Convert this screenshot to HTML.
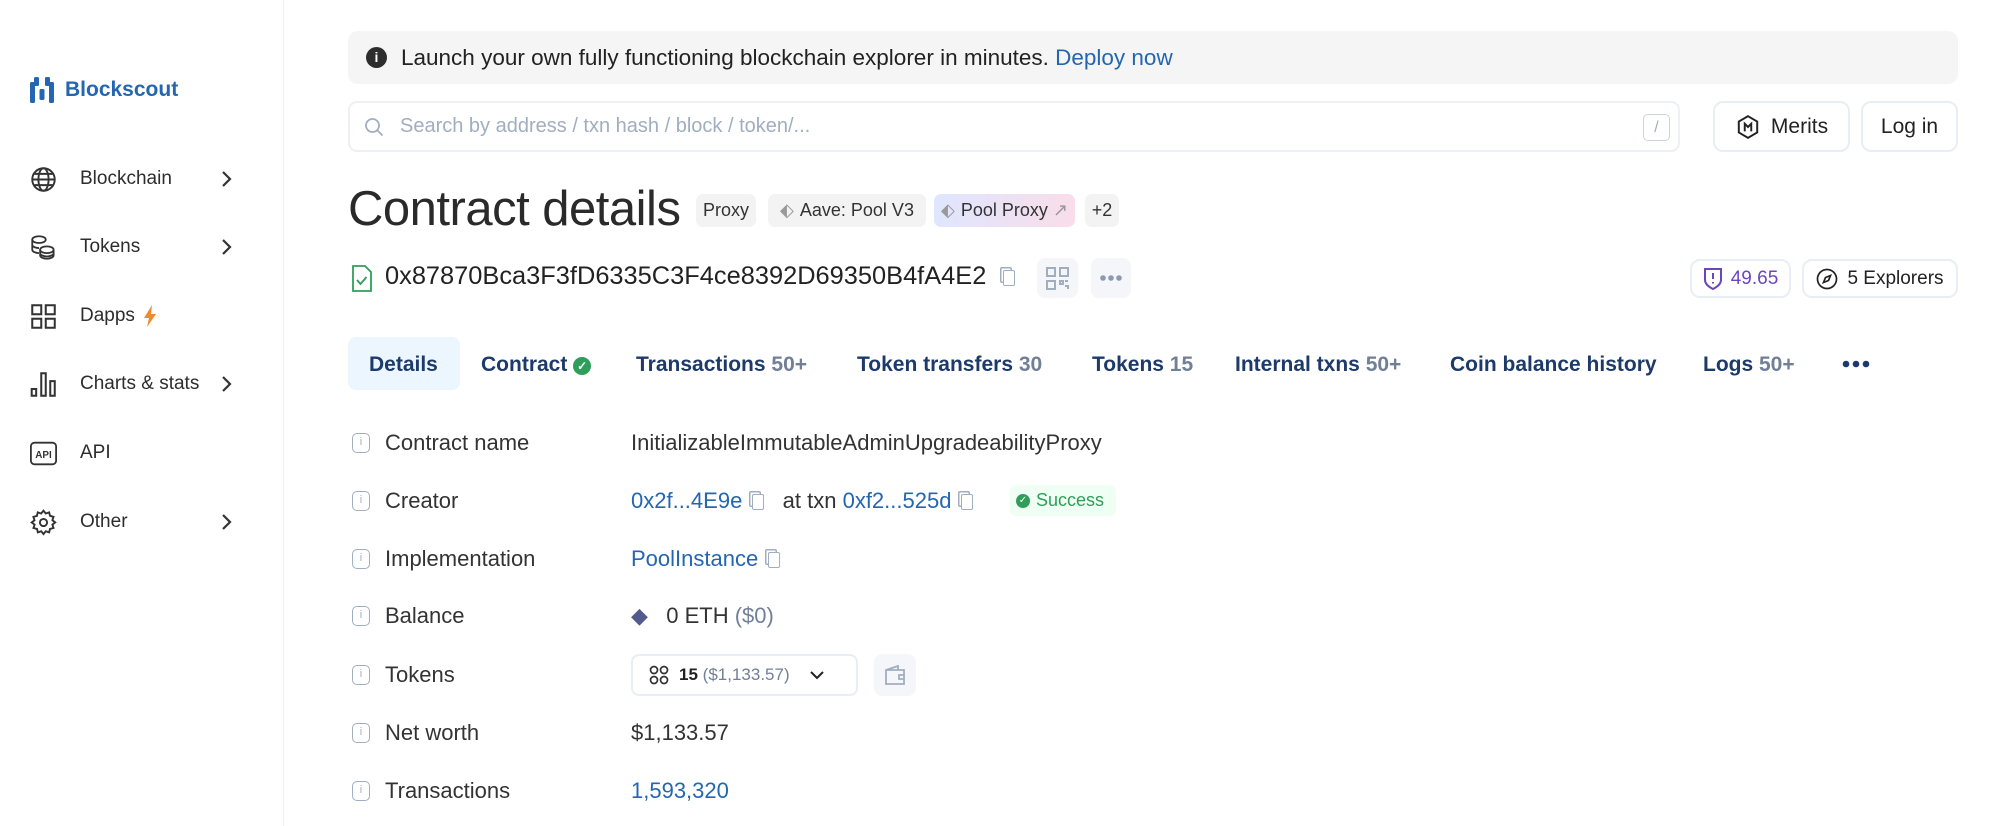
<!DOCTYPE html>
<html><head><meta charset="utf-8">
<style>
*{box-sizing:border-box;margin:0;padding:0}
body{width:2000px;height:826px;background:#fff;font-family:"Liberation Sans",sans-serif;color:#1a1a1a;position:relative;overflow:hidden}
.a{position:absolute}
.side{left:0;top:0;width:284px;height:826px;border-right:1px solid #eef0f3}
.nav{left:30px;height:30px;display:flex;align-items:center;font-size:19px;color:#2d2d2d}
.nav svg{width:27px;height:27px;margin-right:23px}
.chev{left:220px}
.btn{border:2px solid #e8eef5;border-radius:10px;display:flex;align-items:center;justify-content:center;font-size:21px;color:#222}
.tag{height:33px;border-radius:7px;background:#f3f3f3;display:flex;align-items:center;justify-content:center;font-size:18px;color:#333;top:194px}
.tab{top:353px;font-size:21px;font-weight:bold;color:#1d3a6b}
.tab span{color:#718096;font-weight:bold}
.lab{left:352px;display:flex;align-items:center;font-size:22px;color:#333}
.lab i{display:inline-block;flex:none;width:18px;height:20px;border:1.5px solid #a0aec0;border-radius:5px;margin-right:15px;font-style:normal;font-size:11px;color:#a0aec0;text-align:center;line-height:17px}
.val{left:631px;font-size:22px;color:#333}
.lk{color:#2566b0}
.cp{display:inline-block;width:12px;height:16px;border:1.5px solid #a0aec0;border-radius:2px;vertical-align:-2px;margin-left:10px;box-shadow:-3px -3px 0 -1.5px #fff,-3px -3px 0 0 #a0aec0}
</style></head><body>
<div class="a side"></div>
<div class="a" style="left:29px;top:76px;display:flex;align-items:center">
<svg width="26" height="28" viewBox="0 0 26 28"><rect x="1" y="6" width="5" height="21" rx="1.5" fill="#2566b0"/><rect x="20" y="6" width="5" height="21" rx="1.5" fill="#2566b0"/><rect x="10.5" y="13" width="5" height="11" rx="1.5" fill="#2566b0"/><rect x="5" y="1" width="5" height="9" rx="1.5" fill="#2566b0"/><rect x="16" y="1" width="5" height="9" rx="1.5" fill="#2566b0"/></svg>
<span style="font-size:21px;color:#2566b0;font-weight:bold;margin-left:10px">Blockscout</span></div>

<div class="a nav" style="top:164px"><svg viewBox="0 0 24 24" fill="none" stroke="#333" stroke-width="1.7"><circle cx="12" cy="12" r="10"/><ellipse cx="12" cy="12" rx="4.5" ry="10"/><path d="M2 12h20M4 7h16M4 17h16"/></svg>Blockchain</div>
<svg class="a chev" style="top:170px" width="12" height="18" viewBox="0 0 12 18" fill="none" stroke="#333" stroke-width="2.2"><path d="M3 2l7 7-7 7"/></svg>
<div class="a nav" style="top:232px"><svg viewBox="0 0 24 24" fill="none" stroke="#333" stroke-width="1.6"><ellipse cx="8" cy="5" rx="6" ry="3"/><path d="M2 5v9c0 1.6 2.7 3 6 3M2 9.5c0 1.6 2.7 3 6 3"/><ellipse cx="15" cy="14" rx="6" ry="3"/><path d="M9 14v5c0 1.6 2.7 3 6 3s6-1.4 6-3v-5M9 17c0 1.6 2.7 3 6 3s6-1.4 6-3"/></svg>Tokens</div>
<svg class="a chev" style="top:238px" width="12" height="18" viewBox="0 0 12 18" fill="none" stroke="#333" stroke-width="2.2"><path d="M3 2l7 7-7 7"/></svg>
<div class="a nav" style="top:301px"><svg viewBox="0 0 24 24" fill="none" stroke="#333" stroke-width="1.8"><rect x="2" y="2" width="8" height="8"/><rect x="14" y="2" width="8" height="8"/><rect x="2" y="14" width="8" height="8"/><rect x="14" y="14" width="8" height="8"/></svg>Dapps <svg style="width:14px;height:22px;margin:0 0 0 8px" viewBox="0 0 14 22"><path d="M9 0L1 13h5l-2 9 9-13H8z" fill="#f08a2c"/></svg></div>
<div class="a nav" style="top:369px"><svg viewBox="0 0 24 24" fill="none" stroke="#333" stroke-width="1.8"><rect x="1.5" y="16" width="4" height="6"/><rect x="10" y="2" width="4" height="20"/><rect x="18" y="9" width="4" height="13"/></svg>Charts &amp; stats</div>
<svg class="a chev" style="top:375px" width="12" height="18" viewBox="0 0 12 18" fill="none" stroke="#333" stroke-width="2.2"><path d="M3 2l7 7-7 7"/></svg>
<div class="a nav" style="top:438px"><svg viewBox="0 0 30 30"><rect x="1" y="3" width="28" height="24" rx="4" fill="none" stroke="#333" stroke-width="2"/><text x="15" y="20" font-size="11" font-weight="bold" text-anchor="middle" font-family="Liberation Sans" fill="#333">API</text></svg>API</div>
<div class="a nav" style="top:507px"><svg viewBox="0 0 24 24" fill="none" stroke="#333" stroke-width="1.7"><circle cx="12" cy="12" r="3.2"/><path d="M12 1.5l2 2.5 3-1 .8 3.1 3.1.8-1 3 2.5 2-2.5 2 1 3-3.1.8-.8 3.1-3-1-2 2.5-2-2.5-3 1-.8-3.1-3.1-.8 1-3L1.5 12 4 10 3 7l3.1-.8L6.9 3l3 1z"/></svg>Other</div>
<svg class="a chev" style="top:513px" width="12" height="18" viewBox="0 0 12 18" fill="none" stroke="#333" stroke-width="2.2"><path d="M3 2l7 7-7 7"/></svg>

<div class="a" style="left:348px;top:31px;width:1610px;height:53px;background:#f5f5f5;border-radius:10px;display:flex;align-items:center;padding-left:18px;font-size:22.5px;color:#222">
<span style="width:21px;height:21px;border-radius:50%;background:#2d2d2d;color:#fff;font-size:14px;font-weight:bold;text-align:center;line-height:21px;margin-right:14px">i</span>Launch your own fully functioning blockchain explorer in minutes.&nbsp;<span class="lk">Deploy now</span></div>

<div class="a" style="left:348px;top:101px;width:1332px;height:51px;border:2px solid #edf0f4;border-radius:9px;display:flex;align-items:center;padding-left:14px;font-size:20px;color:#a0aec0">
<svg width="20" height="20" viewBox="0 0 20 20" fill="none" stroke="#a0aec0" stroke-width="1.8"><circle cx="8.5" cy="8.5" r="6.5"/><path d="M13.5 13.5l5 5"/></svg><span style="margin-left:16px">Search by address / txn hash / block / token/...</span>
<span style="position:absolute;right:8px;top:11px;width:27px;height:27px;border:1.5px solid #cbd5e0;border-radius:5px;text-align:center;line-height:25px;font-size:16px">/</span></div>
<div class="a btn" style="left:1713px;top:101px;width:137px;height:51px"><svg width="26" height="26" viewBox="0 0 24 24" fill="none" stroke="#222" stroke-width="1.8"><path d="M12 2l8.5 5v10L12 22l-8.5-5V7z"/><path d="M9 16V9l3 3 3-3v7"/></svg><span style="margin-left:10px">Merits</span></div>
<div class="a btn" style="left:1861px;top:101px;width:97px;height:51px">Log in</div>

<div class="a" style="left:348px;top:181px;font-size:49px;color:#2a2a2a;letter-spacing:-0.5px">Contract details</div>
<div class="a tag" style="left:696px;width:60px">Proxy</div>
<div class="a tag" style="left:768px;width:158px"><span style="color:#999;margin-right:6px">⬖</span>Aave: Pool V3</div>
<div class="a tag" style="left:934px;width:141px;background:linear-gradient(90deg,#dfe6ff,#f9dde9)"><span style="color:#999;margin-right:6px">⬖</span>Pool Proxy<span style="color:#999;margin-left:5px">↗</span></div>
<div class="a tag" style="left:1085px;width:34px">+2</div>

<div class="a" style="left:352px;top:265px"><svg width="20" height="27" viewBox="0 0 20 27" fill="none" stroke="#2f9e5a" stroke-width="1.8"><path d="M1 1h12l6 6v19H1z"/><path d="M5 15l3.5 4 6-7"/></svg></div>
<div class="a" style="left:385px;top:262px;font-size:25.4px;color:#222">0x87870Bca3F3fD6335C3F4ce8392D69350B4fA4E2</div>
<div class="a" style="left:1003px;top:270px"><span class="cp" style="margin:0"></span></div>
<div class="a" style="left:1037px;top:258px;width:41px;height:40px;background:#f4f6f9;border-radius:8px"><svg style="margin:9px" width="23" height="23" viewBox="0 0 23 23" fill="none" stroke="#a0aec0" stroke-width="2"><rect x="1" y="1" width="8" height="8"/><rect x="14" y="1" width="8" height="8"/><rect x="1" y="14" width="8" height="8"/><path d="M14 14h3v3h-3zM19 19h3v3M19 14h3"/></svg></div>
<div class="a" style="left:1091px;top:258px;width:40px;height:40px;background:#f4f6f9;border-radius:8px"><svg style="margin:16px 8px" width="24" height="8" viewBox="0 0 24 8" fill="#8a9ab0"><circle cx="4" cy="4" r="2.8"/><circle cx="12" cy="4" r="2.8"/><circle cx="20" cy="4" r="2.8"/></svg></div>
<div class="a btn" style="left:1690px;top:259px;width:101px;height:39px;font-size:19px;color:#6b46c1"><svg width="20" height="24" viewBox="0 0 20 24" fill="none" stroke="#6b46c1" stroke-width="2"><path d="M2 2h16v11c0 4-4 7-8 9-4-2-8-5-8-9z"/><path d="M10 6v6M10 15v1.5"/></svg><span style="margin-left:8px">49.65</span></div>
<div class="a btn" style="left:1802px;top:259px;width:156px;height:39px;font-size:19px"><svg width="22" height="22" viewBox="0 0 22 22" fill="none" stroke="#222" stroke-width="1.7"><circle cx="11" cy="11" r="9.5"/><path d="M14.5 7.5l-2 5-5 2 2-5z"/></svg><span style="margin-left:9px">5 Explorers</span></div>

<div class="a" style="left:348px;top:337px;width:112px;height:53px;background:#ebf6ff;border-radius:8px"></div>
<div class="a tab" style="left:369px">Details</div>
<div class="a tab" style="left:481px">Contract <span style="display:inline-block;width:18px;height:18px;border-radius:50%;background:#2f9e5a;color:#fff;font-size:12px;text-align:center;line-height:18px;vertical-align:1px">✓</span></div>
<div class="a tab" style="left:636px">Transactions <span>50+</span></div>
<div class="a tab" style="left:857px">Token transfers <span>30</span></div>
<div class="a tab" style="left:1092px">Tokens <span>15</span></div>
<div class="a tab" style="left:1235px">Internal txns <span>50+</span></div>
<div class="a tab" style="left:1450px">Coin balance history</div>
<div class="a tab" style="left:1703px">Logs <span>50+</span></div>
<svg class="a" style="left:1842px;top:360px" width="28" height="8" viewBox="0 0 28 8" fill="#1d3a6b"><circle cx="4" cy="4" r="3.3"/><circle cx="14" cy="4" r="3.3"/><circle cx="24" cy="4" r="3.3"/></svg>

<div class="a lab" style="top:430px"><i>i</i>Contract name</div>
<div class="a val" style="top:430px">InitializableImmutableAdminUpgradeabilityProxy</div>
<div class="a lab" style="top:488px"><i>i</i>Creator</div>
<div class="a val" style="top:488px"><span class="lk">0x2f...4E9e</span><span class="cp"></span>&nbsp;&nbsp; at txn <span class="lk">0xf2...525d</span><span class="cp"></span></div>
<div class="a" style="left:1010px;top:485px;width:106px;height:31px;background:#f0fff4;border-radius:6px;font-size:18px;color:#2f9e5a;display:flex;align-items:center;padding-left:6px"><span style="width:14px;height:14px;border-radius:50%;background:#2f9e5a;color:#fff;font-size:10px;text-align:center;line-height:14px;margin-right:6px">✓</span>Success</div>
<div class="a lab" style="top:546px"><i>i</i>Implementation</div>
<div class="a val" style="top:546px"><span class="lk">PoolInstance</span><span class="cp"></span></div>
<div class="a lab" style="top:603px"><i>i</i>Balance</div>
<div class="a val" style="top:603px"><span style="color:#545b8c">◆</span>&nbsp;&nbsp; 0 ETH <span style="color:#718096">($0)</span></div>
<div class="a lab" style="top:662px"><i>i</i>Tokens</div>
<div class="a" style="left:631px;top:654px;width:227px;height:42px;border:2px solid #e8eef5;border-radius:8px;display:flex;align-items:center;padding-left:16px;font-size:17px;color:#222"><svg width="20" height="20" viewBox="0 0 20 20" fill="none" stroke="#333" stroke-width="1.7"><circle cx="5" cy="5" r="3.5"/><circle cx="15" cy="5" r="3.5"/><circle cx="5" cy="15" r="3.5"/><circle cx="15" cy="15" r="3.5"/></svg><b style="margin-left:10px">15</b>&nbsp;<span style="color:#718096">($1,133.57)</span><svg style="margin-left:20px" width="14" height="9" viewBox="0 0 14 9" fill="none" stroke="#222" stroke-width="2"><path d="M1 1l6 6 6-6"/></svg></div>
<div class="a" style="left:874px;top:654px;width:42px;height:42px;background:#f4f6f9;border-radius:8px"><svg style="margin:10px" width="22" height="22" viewBox="0 0 22 22" fill="none" stroke="#a0aec0" stroke-width="1.8"><path d="M2 6h18v14H2zM2 6l12-4v4"/><path d="M20 11h-5v4h5"/></svg></div>
<div class="a lab" style="top:720px"><i>i</i>Net worth</div>
<div class="a val" style="top:720px">$1,133.57</div>
<div class="a lab" style="top:778px"><i>i</i>Transactions</div>
<div class="a val lk" style="top:778px">1,593,320</div>
</body></html>
